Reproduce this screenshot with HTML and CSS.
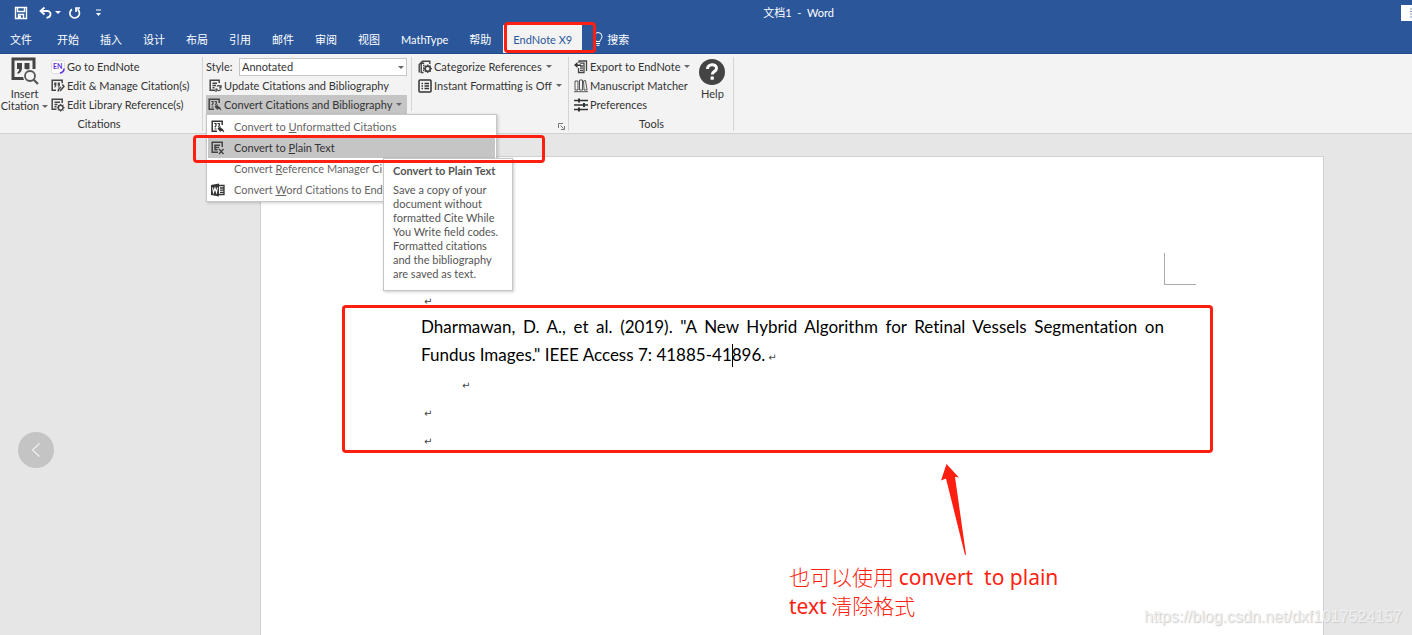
FILE: index.html
```
<!DOCTYPE html>
<html lang="zh-CN">
<head>
    <meta charset="UTF-8">
    <meta name="viewport" content="width=device-width, initial-scale=1.0">
    <title>文档1 - Word</title>
    <link rel="stylesheet" href="styles.css">
</head>
<body>
    <div class="app">
        <header class="titleBar">
            <div class="quick">
                <button class="quickBtn" aria-label="保存">
                    <svg width="14" height="14" viewBox="0 0 14 14"><path d="M1.5 1.5h11v11h-11zM3.5 1.500v4h7v-4M4.500 12.500v-4h5v4" fill="none" stroke="#fff" stroke-width="1.400"/><path d="M5 9.500h2v3H5z" fill="#fff"/></svg>
                </button>
                <button class="quickBtn undo" aria-label="撤消">
                    <svg width="13" height="14" viewBox="0 0 13 14"><path d="M5.500 1.500 1.500 5l4 3.500M2 5h6.500c4.500.5 4 6.500-1 6.800" fill="none" stroke="#fff" stroke-width="1.800"/></svg>
                    <i class="arrow"></i>
                </button>
                <button class="quickBtn redo" aria-label="重复">
                    <svg width="13" height="14" viewBox="0 0 13 14"><path d="M4 3.200A4.800 4.800 0 1 0 9.500 3.300M12 2H8v4" fill="none" stroke="#fff" stroke-width="1.700"/></svg>
                </button>
                <button class="quickBtn more" aria-label="自定义快速访问工具栏">
                    <svg width="7" height="8" viewBox="0 0 7 8"><path d="M1 1h5" stroke="#fff"/><path d="M1 4h5L3.500 7z" fill="#fff"/></svg>
                </button>
            </div>
            <h1 class="docName">文档1&nbsp; -&nbsp; Word</h1>
            <button class="winBtn" aria-label="功能区显示选项">
                <svg width="11" height="16" viewBox="0 0 11 16"><path d="M9 4h2M9 6.500h2M9 9h2M9 12h2" stroke="#7d96c0"/></svg>
            </button>
        </header>

        <nav class="tabs">
            <button class="tab file">文件</button>
            <button class="tab">开始</button>
            <button class="tab">插入</button>
            <button class="tab">设计</button>
            <button class="tab">布局</button>
            <button class="tab">引用</button>
            <button class="tab">邮件</button>
            <button class="tab">审阅</button>
            <button class="tab">视图</button>
            <button class="tab">MathType</button>
            <button class="tab">帮助</button>
            <div class="tabWrap">
                <button class="tab active">EndNote X9</button>
                <span class="mark markTab"></span>
            </div>
            <button class="tab search">
                <svg width="10" height="14" viewBox="0 0 10 14"><path d="M3 9.500C3 7.500 1 7 1 4.500a4 4 0 0 1 8 0C9 7 7 7.500 7 9.500zM3 11.500h4M3.500 13.300h3" fill="none" stroke="#fff"/></svg>
                搜索
            </button>
        </nav>

        <div class="ribbon">
            <section class="group citations">
                <div class="groupBody">
                    <button class="bigBtn insert">
                        <svg width="28" height="29" viewBox="0 0 28 29"><path d="M13 21.500H2V2h21v10" fill="none" stroke="#444" stroke-width="3"/><path d="M6 6h5v5c0 3-1.500 5-4 6l-.8-1.500C7.600 14.700 8.200 13.500 8.200 12H6zM13.500 6h5v5c0 2.500-1 4.500-3.500 6l-1-1.500c1.200-.8 1.800-2 1.800-3.500h-2.300z" fill="#444"/><circle cx="19" cy="19" r="7" fill="#f3f3f3"/><circle cx="19" cy="19" r="5" fill="none" stroke="#555" stroke-width="1.800"/><path d="m22.500 22.500 4.500 4.500" stroke="#555" stroke-width="2.200"/></svg>
                        <span>Insert</span>
                        <span class="withArrow">Citation <i class="arrow"></i></span>
                    </button>
                    <div class="rows">
                        <button class="row">
                            <svg width="14" height="14" viewBox="0 0 14 14"><rect x=".5" y=".5" width="13" height="13" rx="2" fill="#fff" stroke="#ddd"/><path d="M13 8.500c0 2.500-1.500 4-4 4.500" fill="none" stroke="#5b2be0" stroke-width="1.500"/><text x="2" y="9" class="enLogo">EN</text></svg>
                            Go to EndNote
                        </button>
                        <button class="row">
                            <svg width="14" height="14" viewBox="0 0 14 14"><path d="M5 11.300H1.200V1.200h10v3" fill="none" stroke="#444" stroke-width="1.500"/><path d="M3.200 3.500h2.200V6c0 1.400-.7 2.300-1.800 2.800l-.4-.8c.6-.4.9-1 .9-1.600h-.9zM6.700 3.500h2.200V6c0 1.400-.7 2.300-1.800 2.800l-.4-.8c.6-.4.9-1 .9-1.600h-.9z" fill="#444"/><path d="m7 12.500.6-2.200L10 8M9 12l4-4.500-1.600-2" fill="none" stroke="#444" stroke-width="1.500"/></svg>
                            Edit &amp; Manage Citation(s)
                        </button>
                        <button class="row">
                            <svg width="14" height="14" viewBox="0 0 14 14"><path d="M5.500 11.300H1.200V1.200h10V5M3.500 4.200h5.500M3.500 6.500h3M3.500 8.700h2" fill="none" stroke="#444" stroke-width="1.500"/><circle cx="9.700" cy="9.700" r="2.400" fill="none" stroke="#444" stroke-width="1.400"/><path d="M9.700 5.800v1.500M9.700 12v1.700M5.800 9.700h1.500M12 9.700h1.700M7 7l1 1M11.300 11.300l1.200 1.200M12.500 7l-1.200 1M7 12.500l1-1.200" stroke="#444"/></svg>
                            Edit Library Reference(s)
                        </button>
                    </div>
                </div>
                <div class="groupName">Citations</div>
            </section>

            <section class="group biblio">
                <div class="groupBody">
                    <div class="rows styleCol">
                        <div class="styleLine">
                            <label for="bibStyle">Style:</label>
                            <div class="selectBox">
                                <select id="bibStyle">
                                    <option>Annotated</option>
                                </select>
                                <i class="arrow"></i>
                            </div>
                        </div>
                        <button class="row">
                            <svg width="14" height="14" viewBox="0 0 14 14"><path d="M11.200 4V1.200h-9v10H7M4.500 4.200h4.500M4.500 6.500h3.500M4.500 8.700h2" fill="none" stroke="#444" stroke-width="1.500"/><path d="M8 13v-3h1.500M13 6v3h-2M8.300 10c1 2 3.500 2 4.500.3M9 7.500c1-1.500 3-1 3.700 1" fill="none" stroke="#444" stroke-width="1.200"/></svg>
                            Update Citations and Bibliography
                        </button>
                        <div class="menuWrap">
                            <button class="row pressed">
                                <svg width="14" height="14" viewBox="0 0 14 14"><path d="M6 11.300H1.200V1.200h10V5" fill="none" stroke="#444" stroke-width="1.500"/><path d="M3.200 3.500h1.800v2L3.800 7.300M6.500 3.500h1.800v2L7.200 7.300M3.500 9h2" fill="none" stroke="#444" stroke-width="1.200"/><path d="M6.500 8.700 9.700 6v2c2 .3 3.300 2 3.600 5-1-1.600-2-2.300-3.600-2.300v1.500z" fill="#444"/></svg>
                                Convert Citations and Bibliography
                                <i class="arrow"></i>
                            </button>
                            <div class="menu">
                                <button class="menuItem">
                                    <svg width="14" height="14" viewBox="0 0 14 14"><path d="M6 11.300H1.200V1.200h10V5" fill="none" stroke="#333" stroke-width="1.500"/><path d="M3.200 3.500h1.800v2L3.800 7.300M6.500 3.500h1.800v2L7.200 7.300M3.500 9h2" fill="none" stroke="#333" stroke-width="1.200"/><path d="M6.500 8.700 9.700 6v2c2 .3 3.300 2 3.600 5-1-1.600-2-2.300-3.600-2.300v1.500z" fill="#333"/></svg>
                                    <span>Convert to <u>U</u>nformatted Citations</span>
                                </button>
                                <button class="menuItem current">
                                    <svg width="14" height="14" viewBox="0 0 14 14"><path d="M7 11.300H1.200V1.200h10V6M9 4.200H4v4.500h2.500M4 6.500h4" fill="none" stroke="#444" stroke-width="1.500"/><path d="m8 8 4.500 5M12.500 8 8 13" stroke="#444" stroke-width="1.400"/></svg>
                                    <span>Convert to <u>P</u>lain Text</span>
                                </button>
                                <button class="menuItem">
                                    <svg width="14" height="14" viewBox="0 0 14 14"></svg>
                                    <span>Convert <u>R</u>eference Manager Ci</span>
                                </button>
                                <button class="menuItem">
                                    <svg width="14" height="14" viewBox="0 0 14 14"><path d="M0 2 8 .5v13L0 12z" fill="#333"/><path d="M8 2.500h5v9H8M9 5h4M9 7.200h4M9 9.400h4" fill="none" stroke="#333" stroke-width="1.300"/><path d="m1.500 4.500 1 5L4 5l1.500 4.500 1-5" fill="none" stroke="#fff" stroke-width="1.100"/></svg>
                                    <span>Convert <u>W</u>ord Citations to End</span>
                                </button>
                                <div class="tip" role="tooltip">
                                    <strong>Convert to Plain Text</strong>
                                    <p>Save a copy of your document without formatted Cite While You Write field codes. Formatted citations and the bibliography are saved as text.</p>
                                </div>
                                <span class="mark markMenu"></span>
                            </div>
                        </div>
                    </div>
                    <div class="rows formatCol">
                        <button class="row">
                            <svg width="14" height="14" viewBox="0 0 14 14"><path d="M5.500 12.500H3.200V3.200h3M1.200 12.500V4.500L4.500 1.200h7.300V4M5 5.500h1.500M5 8h1M5 10.300h1" fill="none" stroke="#444" stroke-width="1.400"/><circle cx="9.700" cy="8.700" r="2.600" fill="none" stroke="#444" stroke-width="1.700"/><path d="M9.700 4.500v2M9.700 11v2M5.500 8.700h1.800M12 8.700h2M6.800 5.800 8 7M11.400 10.400l1.300 1.300M12.700 5.800 11.400 7M6.800 11.700 8 10.400" stroke="#444" stroke-width="1.300"/></svg>
                            Categorize References
                            <i class="arrow"></i>
                        </button>
                        <button class="row">
                            <svg width="14" height="14" viewBox="0 0 14 14"><rect x="1" y="1" width="12" height="12" rx="1" fill="none" stroke="#333" stroke-width="1.500"/><path d="M3.500 4.500H5M3.500 7H5M3.500 9.500H5M6.500 4.500H11M6.500 7H11M6.500 9.500H11" stroke="#333" stroke-width="1.300"/></svg>
                            Instant Formatting is Off
                            <i class="arrow"></i>
                        </button>
                    </div>
                </div>
                <div class="groupName">
                    <button class="launcher" aria-label="Bibliography options">
                        <svg width="7" height="7" viewBox="0 0 7 7"><path d="M.5 5V.5H5M2.500 2.500l3 3M6.500 3v3.500H3" fill="none" stroke="#777"/></svg>
                    </button>
                </div>
            </section>

            <section class="group tools">
                <div class="groupBody">
                    <div class="rows">
                        <button class="row">
                            <svg width="14" height="14" viewBox="0 0 14 14"><path d="M5 3V1h7.500v10M4.500 8v4.500H10V3.200H6M6 6h3M6 8.200h3M6 10.300h3" fill="none" stroke="#444" stroke-width="1.300"/><path d="M7 4.500H3.500V2L0 5l3.500 3V6H7z" fill="#333"/></svg>
                            Export to EndNote
                            <i class="arrow"></i>
                        </button>
                        <button class="row">
                            <svg width="14" height="14" viewBox="0 0 14 14"><path d="M1 2h3v9H1zM5.500 1h3v10h-3zM9.500 2l2-.5 1.600 9.500h-3zM0 12.700h14" fill="none" stroke="#555"/></svg>
                            Manuscript Matcher
                        </button>
                        <button class="row">
                            <svg width="14" height="14" viewBox="0 0 14 14"><path d="M0 2.500h14M0 7h14M0 11.500h14" stroke="#333" stroke-width="1.300"/><path d="M5 .5v4M10 5v4M5 9.500v4" stroke="#333" stroke-width="2"/></svg>
                            Preferences
                        </button>
                    </div>
                    <button class="bigBtn help">
                        <svg width="28" height="29" viewBox="0 0 28 29"><circle cx="14" cy="15" r="13" fill="#444"/><path d="M9.500 12c0-5.500 9-5.500 9-.8 0 3.300-4.300 3.300-4.300 6.300" fill="none" stroke="#fff" stroke-width="3"/><rect x="12.600" y="19.500" width="3.200" height="3.200" fill="#fff"/></svg>
                        <span>Help</span>
                    </button>
                </div>
                <div class="groupName">Tools</div>
            </section>
        </div>

        <main class="workspace">
            <button class="prev" aria-label="上一张">
                <svg width="10" height="16" viewBox="0 0 10 16"><path d="M8.500 1.500 1.500 8l7 6.500" fill="none" stroke="#f0f0f0" stroke-width="1.200"/></svg>
            </button>
            <article class="paper">
                <div class="corner"></div>
                <p class="para"><span class="ret">↵</span></p>
                <div class="reference">
                    <p class="para">Dharmawan, D. A., et al. (2019). "A New Hybrid Algorithm for Retinal Vessels Segmentation on Fundus Images." IEEE Access 7: 41885-41<span class="caret"></span>896.<span class="ret">↵</span></p>
                    <p class="para indent"><span class="ret">↵</span></p>
                    <p class="para"><span class="ret">↵</span></p>
                    <p class="para"><span class="ret">↵</span></p>
                    <span class="mark markText"></span>
                </div>
                <div class="note">
                    <svg class="noteArrow" width="28" height="94" viewBox="0 0 28 94"><path d="M6.500 1 19 14.500l-4-.7L26 91.500 25 92 6 15.500l-5 2z" fill="#ff1f10"/></svg>
                    <p class="noteText">也可以使用 <span lang="en">convert  to plain text</span> 清除格式</p>
                </div>
            </article>
            <div class="watermark">https://blog.csdn.net/dxf1017524157</div>
        </main>
    </div>
</body>
</html>
```
FILE: styles.css
```
*{
    box-sizing: border-box;
}
body,h1,p{
    margin: 0;
}
body{
    font-family: Lato, "Noto Sans CJK SC", sans-serif;
    font-size: 11px;
    color: #333;
}
button,select{
    font: inherit;
    color: inherit;
    margin: 0;
    padding: 0;
    border: 0;
    background: none;
    white-space: nowrap;
}
svg{
    display: block;
    flex: none;
}
.app{
    min-height: 100vh;
    display: flex;
    flex-direction: column;
    overflow: hidden;
}
.arrow{
    flex: none;
    border: 3px solid transparent;
    border-top-color: #666;
    border-bottom: 0;
}

/* 标题栏 */
.titleBar{
    height: 25px;
    display: flex;
    align-items: center;
    background: #2b579a;
    color: #fff;
}
.quick{
    width: 196px;
    padding-left: 14px;
    display: flex;
    align-items: center;
}
.quickBtn{
    display: flex;
    align-items: center;
    gap: 3px;
}
.quickBtn .arrow{
    border-top-color: #fff;
}
.undo{
    margin-left: 11px;
}
.redo{
    margin-left: 7px;
}
.more{
    margin-left: 14px;
}
.docName{
    flex: 1;
    font-size: 11px;
    font-weight: normal;
    line-height: 22px;
    text-align: center;
}
.winBtn{
    background: #fff;
}

/* 选项卡 */
.tabs{
    height: 29px;
    display: flex;
    align-items: stretch;
    gap: 1px;
    background: #2b579a;
    border-bottom: 1px solid #1f4a8c;
    color: #fff;
}
.tab{
    padding: 0 10px;
}
.file{
    margin-right: 4px;
}
.tabWrap{
    position: relative;
    display: flex;
    margin-left: 1px;
}
.active{
    background: #f3f3f3;
    color: #2b579a;
}
.search{
    display: flex;
    align-items: center;
    gap: 4px;
}

/* 红色标注框 */
.mark{
    position: absolute;
    border: 3px solid #ff1f10;
    border-radius: 4px;
    pointer-events: none;
}
.markTab{
    top: -3px;
    bottom: 0;
    left: 1px;
    right: -14px;
    z-index: 2;
}
.markMenu{
    top: 20px;
    left: -14px;
    width: 352px;
    height: 28px;
}
.markText{
    top: -8px;
    bottom: 0;
    left: -79px;
    right: -49px;
}

/* 功能区 */
.ribbon{
    height: 80px;
    display: flex;
    padding-top: 3px;
    background: #f3f3f3;
    border-bottom: 1px solid #d2d2d2;
}
.group{
    display: flex;
    flex-direction: column;
    border-right: 1px solid #d4d4d4;
    margin-bottom: 2px;
}
.groupBody{
    display: flex;
    height: 58px;
}
.groupName{
    height: 18px;
    line-height: 20px;
    text-align: center;
}
.citations{
    width: 203px;
    padding-right: 4px;
}
.biblio{
    width: 366px;
    padding-left: 3px;
}
.tools{
    width: 165px;
    padding: 0 4px 0 5px;
}
.rows{
    display: flex;
    flex-direction: column;
}
.row{
    height: 19px;
    display: flex;
    align-items: center;
    gap: 2px;
}
.row .arrow{
    margin-left: 2px;
}
.bigBtn{
    display: flex;
    flex-direction: column;
    align-items: center;
    line-height: 12px;
}
.bigBtn svg{
    margin-bottom: 2px;
}
.insert{
    width: 49px;
    margin-right: 2px;
}
.help{
    margin-left: 8px;
}
.withArrow{
    display: flex;
    align-items: center;
    gap: 3px;
}
.enLogo{
    font-size: 7px;
    font-weight: bold;
    fill: #5b2be0;
}
.styleCol{
    width: 201px;
}
.styleCol .row{
    padding-left: 2px;
}
.styleLine{
    height: 19px;
    display: flex;
    align-items: center;
    justify-content: space-between;
}
.selectBox{
    position: relative;
    width: 168px;
}
.selectBox select{
    display: block;
    width: 100%;
    height: 18px;
    padding: 0 2px;
    appearance: none;
    background: #fff;
    border: 1px solid #c6c6c6;
}
.selectBox .arrow{
    position: absolute;
    right: 3px;
    top: 8px;
}
.formatCol{
    margin-left: 4px;
    padding-left: 6px;
    border-left: 1px solid #d4d4d4;
    height: 54px;
}
.launcher{
    display: block;
    margin: 9px 3px 0 auto;
}

/* 下拉菜单 */
.menuWrap{
    position: relative;
}
.pressed{
    width: 100%;
    background: #c5c5c5;
}
.menu{
    position: absolute;
    top: 19px;
    left: 0;
    z-index: 3;
    width: 291px;
    padding: 1px;
    background: #fff;
    border: 1px solid #c6c6c6;
    box-shadow: 1px 1px 3px rgba(0, 0, 0, 0.2);
}
.menuItem{
    width: 100%;
    height: 21px;
    padding-left: 3px;
    display: flex;
    align-items: center;
    gap: 9px;
    color: #666;
}
.current{
    background: #c5c5c5;
    color: #333;
}
.tip{
    position: absolute;
    top: 43px;
    left: 176px;
    width: 130px;
    padding: 5px 9px 9px;
    background: #fff;
    border: 1px solid #c6c6c6;
    box-shadow: 1px 1px 3px rgba(0, 0, 0, 0.2);
    color: #555;
    line-height: 14px;
}
.tip strong{
    display: block;
    margin-bottom: 5px;
    white-space: nowrap;
}

/* 文档区域 */
.workspace{
    position: relative;
    flex: 1;
    display: flex;
    padding: 22px 88px 0 260px;
    background: #e6e6e6;
}
.paper{
    position: relative;
    flex: 1;
    padding: 96px 159px 0 160px;
    background: #fff;
    border: 1px solid #d0d0d0;
    border-bottom: 0;
    color: #000;
}
.corner{
    width: 32px;
    height: 32px;
    margin: 0 -32px 0 auto;
    border-left: 1px solid #aaa;
    border-bottom: 1px solid #aaa;
}
.para{
    font-family: Lato, sans-serif;
    font-size: 17px;
    font-variant-ligatures: none;
    line-height: 28px;
    text-align: justify;
}
.indent{
    padding-left: 38px;
}
.ret{
    margin-left: 3px;
    font-family: "DejaVu Sans", sans-serif;
    font-size: 10px;
    line-height: 1;
    color: #444;
}
.reference{
    position: relative;
}
.caret{
    display: inline-block;
    width: 1px;
    height: 23px;
    margin-right: -1px;
    vertical-align: -6px;
    background: #000;
}
.note{
    position: absolute;
    top: 306px;
    left: 528px;
    width: 300px;
}
.noteArrow{
    margin-left: 151px;
}
.noteText{
    margin-top: 5px;
    font-family: "Noto Sans CJK SC", sans-serif;
    font-size: 21px;
    line-height: 28px;
    font-weight: 300;
    white-space: pre-wrap;
    color: #ff1f10;
}
.noteText span{
    font-family: "Noto Sans", sans-serif;
    font-weight: 400;
}
.prev{
    position: absolute;
    top: 298px;
    left: 18px;
    width: 36px;
    height: 36px;
    display: flex;
    align-items: center;
    justify-content: center;
    border-radius: 50%;
    background: #c4c4c4;
}
.watermark{
    position: absolute;
    right: 10px;
    bottom: 8px;
    font-family: "Liberation Sans", sans-serif;
    font-size: 16px;
    line-height: 20px;
    color: #f0f0f0;
    text-shadow: 1px 1px 1px #c8c8c8;
}
```
